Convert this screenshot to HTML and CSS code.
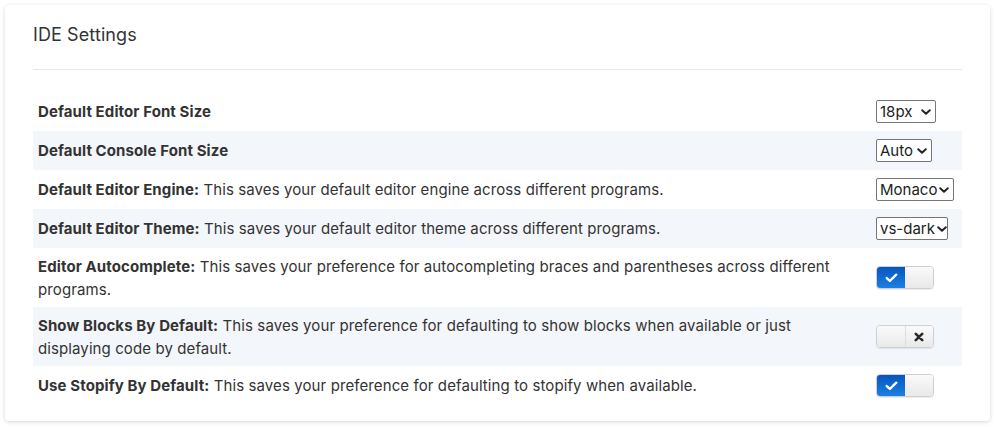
FILE: index.html
```html
<!DOCTYPE html>
<html>
<head>
<meta charset="utf-8">
<link rel="stylesheet" href="styles.css">
</head>
<body>
<div class="card">
  <h4 class="card-title">IDE Settings</h4>
  <hr class="divider">
  <table class="settings">
    <tbody>
      <tr>
        <td class="label"><b>Default Editor Font Size</b></td>
        <td class="control">
          <div class="select w-18"><span>18px</span><svg class="chev" viewBox="0 0 10 6" width="10" height="6"><path d="M1.2 1.2 L5 4.8 L8.8 1.2" fill="none" stroke="#222" stroke-width="1.9" stroke-linecap="round" stroke-linejoin="round"/></svg></div>
        </td>
      </tr>
      <tr>
        <td class="label"><b>Default Console Font Size</b></td>
        <td class="control">
          <div class="select w-auto"><span>Auto</span><svg class="chev" viewBox="0 0 10 6" width="10" height="6"><path d="M1.2 1.2 L5 4.8 L8.8 1.2" fill="none" stroke="#222" stroke-width="1.9" stroke-linecap="round" stroke-linejoin="round"/></svg></div>
        </td>
      </tr>
      <tr>
        <td class="label"><b>Default Editor Engine:</b> This saves your default editor engine across different programs.</td>
        <td class="control">
          <div class="select w-monaco"><span>Monaco</span><svg class="chev" viewBox="0 0 10 6" width="10" height="6"><path d="M1.2 1.2 L5 4.8 L8.8 1.2" fill="none" stroke="#222" stroke-width="1.9" stroke-linecap="round" stroke-linejoin="round"/></svg></div>
        </td>
      </tr>
      <tr>
        <td class="label"><b>Default Editor Theme:</b> This saves your default editor theme across different programs.</td>
        <td class="control">
          <div class="select w-dark"><span>vs-dark</span><svg class="chev" viewBox="0 0 10 6" width="10" height="6"><path d="M1.2 1.2 L5 4.8 L8.8 1.2" fill="none" stroke="#222" stroke-width="1.9" stroke-linecap="round" stroke-linejoin="round"/></svg></div>
        </td>
      </tr>
      <tr>
        <td class="label"><b>Editor Autocomplete:</b> This saves your preference for autocompleting braces and parentheses across different programs.</td>
        <td class="control">
          <div class="toggle">
            <span class="half on"><svg viewBox="0 0 14 11" width="13" height="10"><path d="M1.8 5.6 L5.2 8.8 L12.2 1.8" fill="none" stroke="#fff" stroke-width="2.6" stroke-linecap="round" stroke-linejoin="round"/></svg></span>
            <span class="half off"></span>
          </div>
        </td>
      </tr>
      <tr>
        <td class="label"><b>Show Blocks By Default:</b> This saves your preference for defaulting to show blocks when available or just displaying code by default.</td>
        <td class="control">
          <div class="toggle">
            <span class="half off"></span>
            <span class="half off"><svg viewBox="0 0 10 10" width="10" height="10"><path d="M1.8 1.8 L8.2 8.2 M8.2 1.8 L1.8 8.2" fill="none" stroke="#2b2b2b" stroke-width="2.6" stroke-linecap="round"/></svg></span>
          </div>
        </td>
      </tr>
      <tr>
        <td class="label"><b>Use Stopify By Default:</b> This saves your preference for defaulting to stopify when available.</td>
        <td class="control">
          <div class="toggle">
            <span class="half on"><svg viewBox="0 0 14 11" width="13" height="10"><path d="M1.8 5.6 L5.2 8.8 L12.2 1.8" fill="none" stroke="#fff" stroke-width="2.6" stroke-linecap="round" stroke-linejoin="round"/></svg></span>
            <span class="half off"></span>
          </div>
        </td>
      </tr>
    </tbody>
  </table>
</div>
</body>
</html>
```
FILE: styles.css
```css
html, body {
  margin: 0;
  padding: 0;
  background: #ffffff;
}
body {
  font-family: Inter, "Open Sans", sans-serif;
  font-size: 15px;
  letter-spacing: 0.1px;
  color: #333333;
}
.card {
  margin: 5px 6px 6px 5px;
  width: 985px;
  box-sizing: border-box;
  padding: 19px 28px 16px 28px;
  background: #ffffff;
  border-radius: 4px;
  box-shadow: 0 1px 4px rgba(0, 0, 0, 0.16);
}
.card-title {
  margin: 0;
  font-size: 18px;
  line-height: 22px;
  font-weight: 400;
  letter-spacing: 0.1px;
  color: #333333;
}
.divider {
  margin: 23px 0 22px 0;
  border: 0;
  border-top: 1px solid #e6e6e6;
  height: 0;
}
.settings {
  width: 100%;
  border-collapse: collapse;
  border-spacing: 0;
}
.settings tr:nth-child(even) td {
  background: #f3f6fa;
}
.settings td {
  vertical-align: middle;
}
.settings .label {
  padding: 6.5px 5px;
  line-height: 23px;
}
.settings .label b {
  font-weight: 700;
  color: #333333;
}
.settings .control {
  width: 81px;
  padding: 8px 5px;
  line-height: 0;
}
.select {
  display: inline-flex;
  align-items: center;
  justify-content: space-between;
  box-sizing: border-box;
  height: 23px;
  padding: 0 4px 0 3px;
  border: 1px solid #767676;
  border-radius: 2px;
  background: #ffffff;
  font-size: 15px;
  letter-spacing: 0;
  color: #222222;
  line-height: 21px;
  white-space: nowrap;
}
.chev {
  flex: none;
  margin-left: 2px;
}
.w-18 { width: 60px; }
.w-auto { width: 56px; }
.w-monaco { width: 78px; }
.w-dark { width: 72px; }
.toggle {
  display: flex;
  width: 58px;
  height: 23px;
  box-sizing: border-box;
  border: 1px solid #cfcfcf;
  border-radius: 4px;
  overflow: hidden;
  box-shadow: 0 1px 1px rgba(0, 0, 0, 0.08);
}
.half {
  flex: 1;
  display: flex;
  align-items: center;
  justify-content: center;
}
.half.on {
  background: linear-gradient(to bottom, #0656c0, #1b80e2);
}
.half.off {
  background: linear-gradient(to bottom, #fafafa, #e9e9e9);
}
.half + .half.off {
  border-left: 1px solid #dddddd;
}
.half.on + .half.off {
  border-left: 0;
}
```
